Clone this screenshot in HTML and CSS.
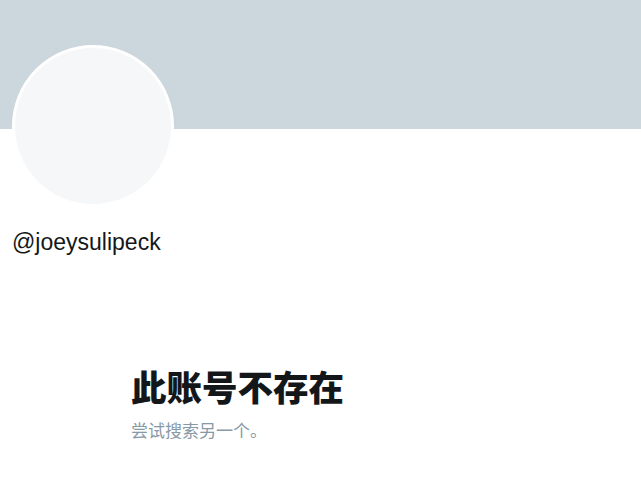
FILE: index.html
```html
<!DOCTYPE html>
<html lang="zh">
<head>
<meta charset="utf-8">
<link rel="stylesheet" href="styles.css">
</head>
<body>
<div class="page">
  <div class="banner"></div>
  <div class="profile">
    <div class="avatar"></div>
    <div class="handle">@joeysulipeck</div>
  </div>
  <div class="empty">
    <div class="title">此账号不存在</div>
    <div class="sub">尝试搜索另一个。</div>
  </div>
</div>
</body>
</html>
```

FILE: styles.css
```css
html, body {
  margin: 0;
  padding: 0;
  background: #ffffff;
}
.page {
  width: 641px;
  height: 478px;
  overflow: hidden;
  font-family: "Liberation Sans", Arial, "Noto Sans CJK SC", sans-serif;
}
.banner {
  height: 129px;
  background: #ccd6dd;
}
.profile {
  padding-left: 12px;
}
.avatar {
  width: 156px;
  height: 156px;
  margin-top: -84px;
  border: 3px solid #ffffff;
  border-radius: 50%;
  background: #f5f7f8;
  position: relative;
}
.handle {
  margin-top: 22px;
  font-size: 23px;
  line-height: 26px;
  color: #14171a;
}
.empty {
  padding-left: 131px;
  margin-top: 110px;
}
.title {
  font-family: "Noto Sans CJK SC", sans-serif;
  font-weight: 800;
  font-size: 35.5px;
  line-height: 42px;
  color: #14171a;
}
.sub {
  margin-top: 12px;
  font-family: "Noto Sans CJK SC", sans-serif;
  font-size: 17px;
  line-height: 22px;
  color: #8899a6;
}
```
